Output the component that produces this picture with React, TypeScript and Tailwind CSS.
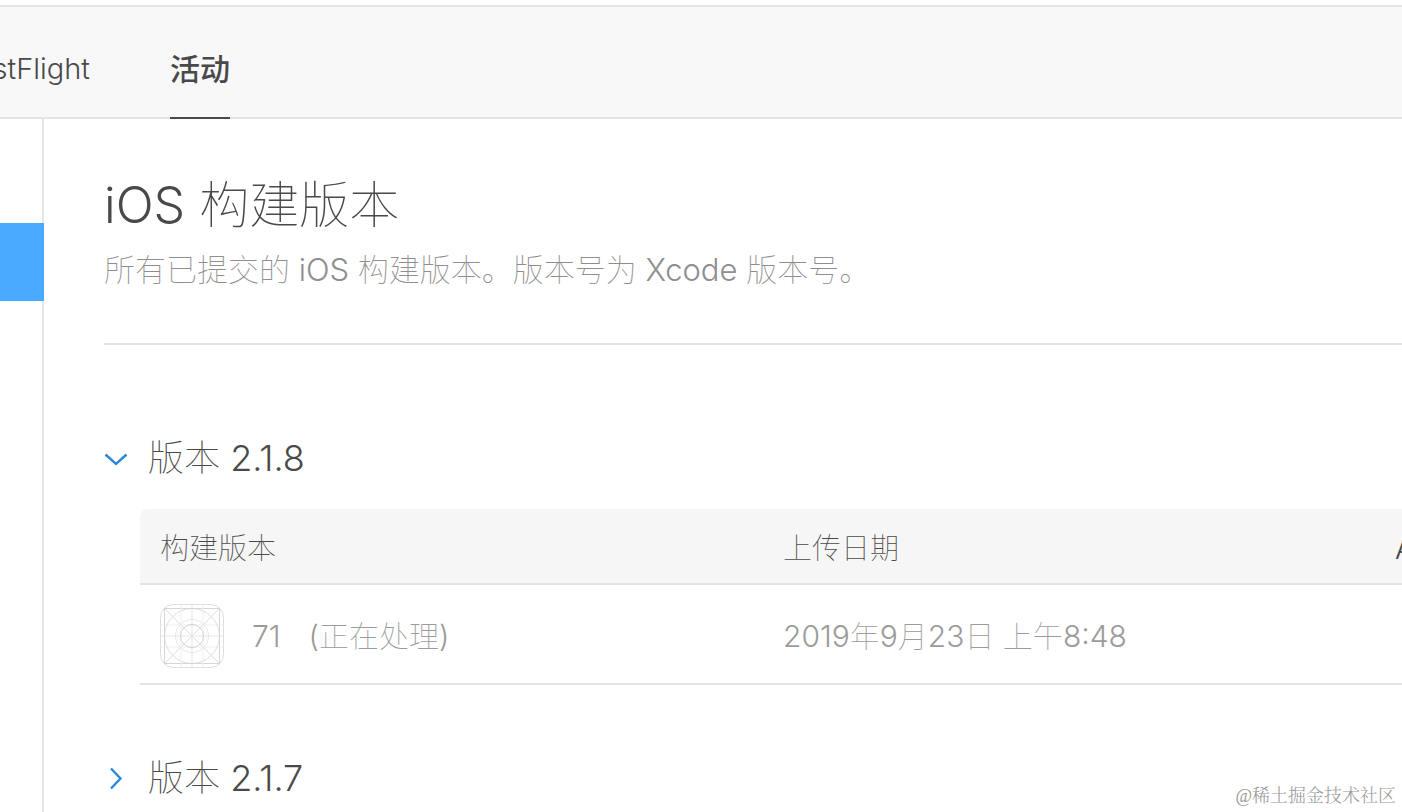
import React, { useState } from "react";

interface Build {
    number: string;
    status: string;
    uploaded: string;
}

interface Version {
    id: string;
    builds: Build[];
}

const versions: Version[] = [
    { id: "2.1.8", builds: [{ number: "71", status: "(正在处理)", uploaded: "2019年9月23日 上午8:48" }] },
    { id: "2.1.7", builds: [] },
];

// Chinese runs stay thin, Latin letters and digits go one step heavier.
function MixedText({ text }: { text: string }) {
    return (
        <span className="font-thin">
            {text.split(/([!-~]+)/).map((part, i) =>
                i % 2 === 1 ? (
                    <span key={i} className="font-light">
                        {part}
                    </span>
                ) : (
                    part
                )
            )}
        </span>
    );
}

function AppIconGrid() {
    return (
        <svg className="size-16 shrink-0" viewBox="0 0 64 64" fill="none" stroke="#d6d6d6" strokeWidth="0.8" aria-hidden="true">
            <rect x="0.5" y="0.5" width="63" height="63" rx="13" />
            <rect x="4.5" y="4.5" width="55" height="55" stroke="#cccccc" />
            <path d="M4.5 4.5l55 55M59.5 4.5l-55 55" />
            <path d="M32 0.5v63M0.5 32h63" stroke="#dedede" />
            <path d="M21 0.5v63M43 0.5v63M0.5 21h63M0.5 43h63" stroke="#ebebeb" />
            <circle cx="32" cy="32" r="27.5" />
            <circle cx="32" cy="32" r="16.5" stroke="#e2e2e2" />
            <circle cx="32" cy="32" r="11.5" stroke="#cccccc" />
        </svg>
    );
}

function Chevron({ open }: { open: boolean }) {
    return (
        <svg className="size-6 shrink-0" viewBox="0 0 24 24" fill="none" stroke="#2b87da" strokeWidth="2.4" aria-hidden="true">
            {open ? <path d="M1.5 8.5L12 18l10.5-9.5" /> : <path d="M7 2.500l9.500 10-9.500 10" />}
        </svg>
    );
}

function BuildTable({ builds }: { builds: Build[] }) {
    return (
        <div className="mt-[27px] ml-9 overflow-hidden rounded-tl-lg">
            <table className="w-full table-fixed text-left text-[29px] leading-10 whitespace-nowrap">
                <thead>
                    <tr className="h-[75px] border-b-2 border-[#e3e3e3] bg-[#f6f6f6]">
                        <th className="w-[623px] px-5 pt-1.5 font-thin">构建版本</th>
                        <th className="px-5 pt-1.5 font-thin">上传日期</th>
                        <th className="w-[27px] pt-1.5 pl-5 font-light">App Store</th>
                    </tr>
                </thead>
                <tbody className="text-[30px] text-[#9b9b9b]">
                    {builds.map((build) => (
                        <tr key={build.number} className="h-[100px] border-b-2 border-[#e3e3e3]">
                            <td className="px-5 pt-1">
                                <div className="flex items-center gap-7">
                                    <AppIconGrid />
                                    <MixedText text={build.number} />
                                    <MixedText text={build.status} />
                                </div>
                            </td>
                            <td className="px-5 pt-1">
                                <MixedText text={build.uploaded} />
                            </td>
                            <td />
                        </tr>
                    ))}
                </tbody>
            </table>
        </div>
    );
}

export default function App() {
    const [openVersion, setOpenVersion] = useState("2.1.8");

    return (
        <div className="relative flex min-h-screen flex-col overflow-hidden bg-white pt-[5px] font-['Inter','Noto_Sans_CJK_SC',sans-serif] text-[#494949]">
            <nav className="flex h-[114px] gap-20 border-y-2 border-[#e5e5e5] bg-[#f8f8f8] text-[30px]">
                <div className="flex w-[90px] justify-end overflow-hidden">
                    <a href="#testflight" className="flex items-center pt-3.5 text-[29px] font-light">
                        TestFlight
                    </a>
                </div>
                <a href="#activity" aria-current="page" className="-mb-0.5 flex items-center border-b-2 border-[#494949] pt-3.5 font-medium">
                    活动
                </a>
            </nav>
            <div className="flex grow">
                <aside className="w-11 shrink-0 border-r-2 border-[#e5e5e5] pt-[104px]">
                    <div className="-mr-0.5 h-[78px] bg-[#48a9ff]" />
                </aside>
                <main className="min-w-0 grow pl-[60px]">
                    <header className="border-b-2 border-[#e3e3e3] pt-[54px] pb-[52px]">
                        <h1 className="text-[50px] leading-[64px]">
                            <MixedText text="iOS 构建版本" />
                        </h1>
                        <p className="mt-3 text-[31px] leading-[42px] text-[#8e8e8e]">
                            <MixedText text="所有已提交的 iOS 构建版本。版本号为 Xcode 版本号。" />
                        </p>
                    </header>
                    <div className="mt-[89px] flex flex-col gap-[69px]">
                        {versions.map((version) => {
                            const open = openVersion === version.id;
                            return (
                                <section key={version.id}>
                                    <h2>
                                        <button
                                            type="button"
                                            aria-expanded={open}
                                            onClick={() => setOpenVersion(open ? "" : version.id)}
                                            className="flex items-center gap-5 text-[36px] leading-[48px]"
                                        >
                                            <Chevron open={open} />
                                            <MixedText text={`版本 ${version.id}`} />
                                        </button>
                                    </h2>
                                    {open && <BuildTable builds={version.builds} />}
                                </section>
                            );
                        })}
                    </div>
                </main>
            </div>
            <p className="absolute right-1.5 bottom-1 font-['Liberation_Serif','Noto_Serif_CJK_SC','Noto_Sans_CJK_SC',serif] text-[18px] leading-6 font-light text-[#999999]">
                @稀土掘金技术社区
            </p>
        </div>
    );
}
